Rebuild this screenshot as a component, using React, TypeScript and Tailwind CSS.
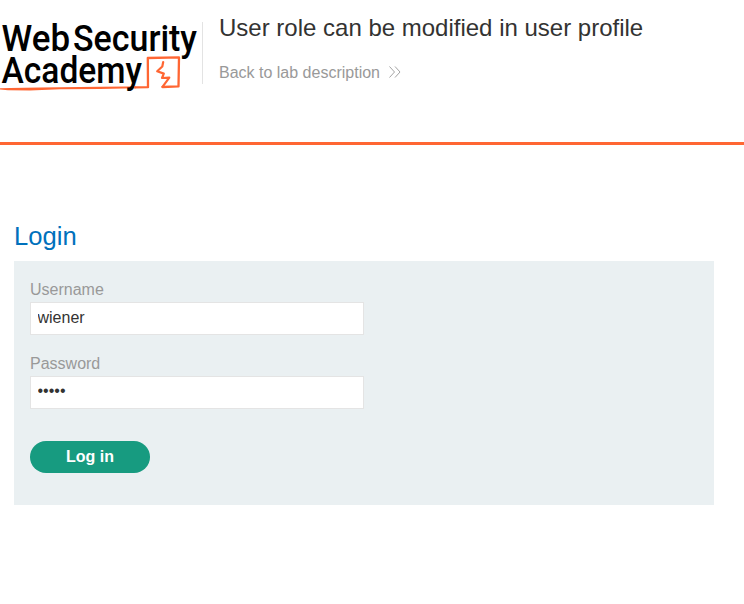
import React from "react";

function Logo() {
  return (
    <svg
      width="202"
      height="96"
      viewBox="0 0 202 96"
      className="block shrink-0 overflow-visible"
      role="img"
      aria-label="Web Security Academy"
    >
      <path d="M0 88.2L10 88L40 87.6L100 86.7L126 86.5H136V88.3L100 88.9L60 89.3L30 90.4L8 90.2L0 89.4Z" fill="#ff6633" />
      <g
        fontFamily="Roboto, 'Liberation Sans', sans-serif"
        fontWeight="500"
        fontSize="37"
        fill="#000"
      >
        <text x="1.5" y="50.9" textLength="68.5" lengthAdjust="spacingAndGlyphs">Web</text>
        <text x="73" y="50.9" textLength="124" lengthAdjust="spacingAndGlyphs">Security</text>
        <text x="1.5" y="83.4" textLength="140.5" lengthAdjust="spacingAndGlyphs">Academy</text>
      </g>
      <g fill="none" stroke="#ff6633" strokeLinejoin="round" strokeLinecap="round">
        <path d="M135 87.4L148 87.2L147.8 58L179 57.4L178.5 86.4L162.5 87" strokeWidth="2.3" />
        <path d="M163.2 62L162.3 66.5L157.2 71.2L163.8 73.6L162 78L169.3 77.7L162.5 86.8" strokeWidth="2.2" />
      </g>
    </svg>
  );
}

function Field({ label, type, value }: { label: string; type: string; value: string }) {
  return (
    <label className="block h-[74px]">
      <span className="block h-6 text-base leading-6 text-[#999]">{label}</span>
      <input
        type={type}
        defaultValue={value}
        className={`block h-[33px] w-[334px] border border-[#e4e4e4] bg-white px-[6.5px] text-base text-[#333332] outline-none ${
          type === "password" ? "pb-[3px]" : "pb-px"
        }`}
      />
    </label>
  );
}

export default function App() {
  return (
    <div className="h-[604px] overflow-hidden bg-white font-['Liberation_Sans',Arial,sans-serif]">
      <header className="flex h-[145px] border-b-[3px] border-[#ff6633]">
        <Logo />
        <div className="mt-[22px] h-[62px] w-px shrink-0 bg-[#e3e3e3]" />
        <div className="ml-4 pt-3">
          <h1 className="h-8 whitespace-nowrap text-2xl leading-8 text-[#333332]">
            User role can be modified in user profile
          </h1>
          <a className="mt-[17px] flex h-6 items-center text-base leading-6 text-[#999]">
            Back to lab description
            <svg width="12" height="12" viewBox="0 0 12 12" fill="none" stroke="#999" strokeWidth="0.9" className="-mt-0.5 ml-[9px]">
              <path d="M.5 .5L5.5 6L.5 11.5M6 .5L11 6L6 11.5" />
            </svg>
          </a>
        </div>
      </header>
      <main className="ml-3.5 w-[700px] pt-[75px]">
        <h2 className="h-[41px] text-[25.6px] leading-[32px] text-[#0071bc]">Login</h2>
        <form className="h-[244px] bg-[#eaf0f2] px-4 pt-[17px]">
          <Field label="Username" type="text" value="wiener" />
          <Field label="Password" type="password" value="admin" />
          <button
            type="button"
            className="mt-[15px] h-8 w-[120px] rounded-full bg-[#179b80] text-base font-bold leading-8 text-white"
          >
            Log in
          </button>
        </form>
      </main>
    </div>
  );
}
